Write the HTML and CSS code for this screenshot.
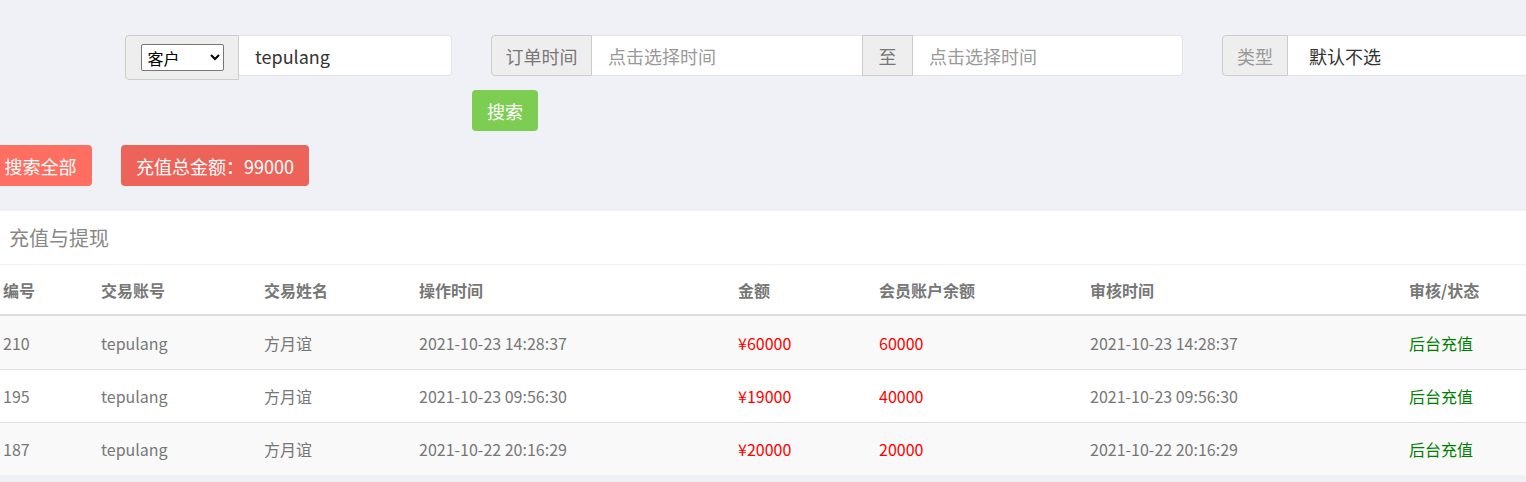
FILE: index.html
```html
<!DOCTYPE html>
<html lang="zh">
<head>
<meta charset="utf-8">
<title>充值与提现</title>
<link rel="stylesheet" href="styles.css">
</head>
<body>
<div class="page">
  <div class="filters">
    <div class="group g-customer">
      <span class="addon addon-select">
        <select class="sel"><option>客户</option></select>
      </span>
      <input class="field field-user" type="text" value="tepulang">
    </div>
    <div class="group g-time">
      <span class="addon addon-time">订单时间</span>
      <input class="field field-date" type="text" placeholder="点击选择时间">
      <span class="addon addon-mid">至</span>
      <input class="field field-date2" type="text" placeholder="点击选择时间">
    </div>
    <div class="group g-type">
      <span class="addon addon-type">类型</span>
      <span class="field field-type">默认不选</span>
    </div>
  </div>
  <div class="row-search">
    <button class="btn btn-green">搜索</button>
  </div>
  <div class="row-actions">
    <button class="btn btn-coral">搜索全部</button>
    <button class="btn btn-red">充值总金额：99000</button>
  </div>

  <div class="card">
    <div class="card-head">充值与提现</div>
    <table class="tbl">
      <colgroup>
        <col class="c1"><col class="c2"><col class="c3"><col class="c4"><col class="c5"><col class="c6"><col class="c7"><col class="c8">
      </colgroup>
      <thead>
        <tr><th>编号</th><th>交易账号</th><th>交易姓名</th><th>操作时间</th><th>金额</th><th>会员账户余额</th><th>审核时间</th><th>审核/状态</th></tr>
      </thead>
      <tbody>
        <tr class="odd"><td>210</td><td>tepulang</td><td>方月谊</td><td>2021-10-23 14:28:37</td><td class="red">¥60000</td><td class="red">60000</td><td>2021-10-23 14:28:37</td><td class="green">后台充值</td></tr>
        <tr><td>195</td><td>tepulang</td><td>方月谊</td><td>2021-10-23 09:56:30</td><td class="red">¥19000</td><td class="red">40000</td><td>2021-10-23 09:56:30</td><td class="green">后台充值</td></tr>
        <tr class="odd"><td>187</td><td>tepulang</td><td>方月谊</td><td>2021-10-22 20:16:29</td><td class="red">¥20000</td><td class="red">20000</td><td>2021-10-22 20:16:29</td><td class="green">后台充值</td></tr>
      </tbody>
    </table>
  </div>
</div>
</body>
</html>
```

FILE: styles.css
```css
html, body {
  margin: 0;
  padding: 0;
  background: #f0f1f6;
  overflow: hidden;
}
body {
  font-family: "Noto Sans CJK SC", "Noto Sans", sans-serif;
  color: #333;
}
.page {
  width: 1526px;
  padding-top: 35px;
}
.filters {
  display: flex;
  align-items: flex-start;
  gap: 39px;
  padding-left: 125px;
}
.group {
  display: flex;
  align-items: flex-start;
}
.addon {
  box-sizing: border-box;
  height: 41px;
  display: flex;
  align-items: center;
  justify-content: center;
  background: #eee;
  border: 1px solid #ccc;
  color: #777;
  font-size: 18px;
}
.addon-select {
  width: 114px;
  height: 45px;
  border-radius: 4px 0 0 4px;
}
.sel {
  width: 83px;
  height: 27px;
  font-family: "Noto Sans CJK SC", sans-serif;
  font-size: 16px;
  color: #000;
  background: #fff;
  border: 1px solid #767676;
  border-radius: 2px;
  padding: 0 2px;
}
.field {
  box-sizing: border-box;
  height: 41px;
  border: 1px solid #e2e3e8;
  background: #fff;
  font-family: "Noto Sans CJK SC", "Noto Sans", sans-serif;
  font-size: 18px;
  color: #333;
  padding: 0 16px;
  outline: none;
  display: flex;
  align-items: center;
}
.field::placeholder { color: #999; }
.field-user {
  width: 213px;
  border-left: 0;
  border-radius: 0 4px 4px 0;
}
.addon-time {
  width: 101px;
  border-radius: 4px 0 0 4px;
}
.field-date {
  width: 270px;
  border-left: 0;
  border-right: 0;
}
.addon-mid {
  width: 51px;
}
.field-date2 {
  width: 270px;
  border-left: 0;
  border-radius: 0 4px 4px 0;
}
.addon-type {
  width: 66px;
  border-radius: 4px 0 0 4px;
  color: #999;
}
.field-type {
  width: 238px;
  border-left: 0;
  border-right: 0;
  padding-left: 21px;
  color: #333;
}
.btn {
  box-sizing: border-box;
  height: 41px;
  border: 0;
  border-radius: 4px;
  color: #fff;
  font-family: "Noto Sans CJK SC", sans-serif;
  font-size: 18px;
  padding: 0;
}
.row-search {
  padding: 10px 0 0 472px;
  display: flex;
}
.btn-green {
  background: #7ccd51;
  width: 66px;
}
.row-actions {
  display: flex;
  gap: 29px;
  margin-left: -11px;
  padding-top: 14px;
}
.btn-coral {
  background: #ff6f61;
  width: 103px;
}
.btn-red {
  background: #ed6359;
  width: 188px;
}
.card {
  margin-top: 25px;
  margin-left: -5px;
  background: #fff;
}
.card-head {
  box-sizing: border-box;
  height: 54px;
  padding-left: 14px;
  display: flex;
  align-items: center;
  font-size: 20px;
  color: #888;
  border-bottom: 1px solid #f0f1f6;
}
.tbl {
  border-collapse: collapse;
  table-layout: fixed;
  width: 1531px;
  font-size: 16px;
  color: #777;
}
.c1 { width: 98px; }
.c2 { width: 163px; }
.c3 { width: 155px; }
.c4 { width: 319px; }
.c5 { width: 141px; }
.c6 { width: 211px; }
.c7 { width: 319px; }
.c8 { width: 125px; }
.tbl th {
  text-align: left;
  font-weight: bold;
  color: #777;
  height: 49px;
  padding: 0 8px;
  border-bottom: 2px solid #ddd;
  white-space: nowrap;
}
.tbl td {
  height: 52px;
  padding: 0 8px;
  border-top: 1px solid #ddd;
  white-space: nowrap;
}
.tbl tbody tr:first-child td { border-top: 0; height: 53px; }
.tbl tr.odd { background: #f9f9f9; }
.red { color: #f00; }
.green { color: #008000; }
```
